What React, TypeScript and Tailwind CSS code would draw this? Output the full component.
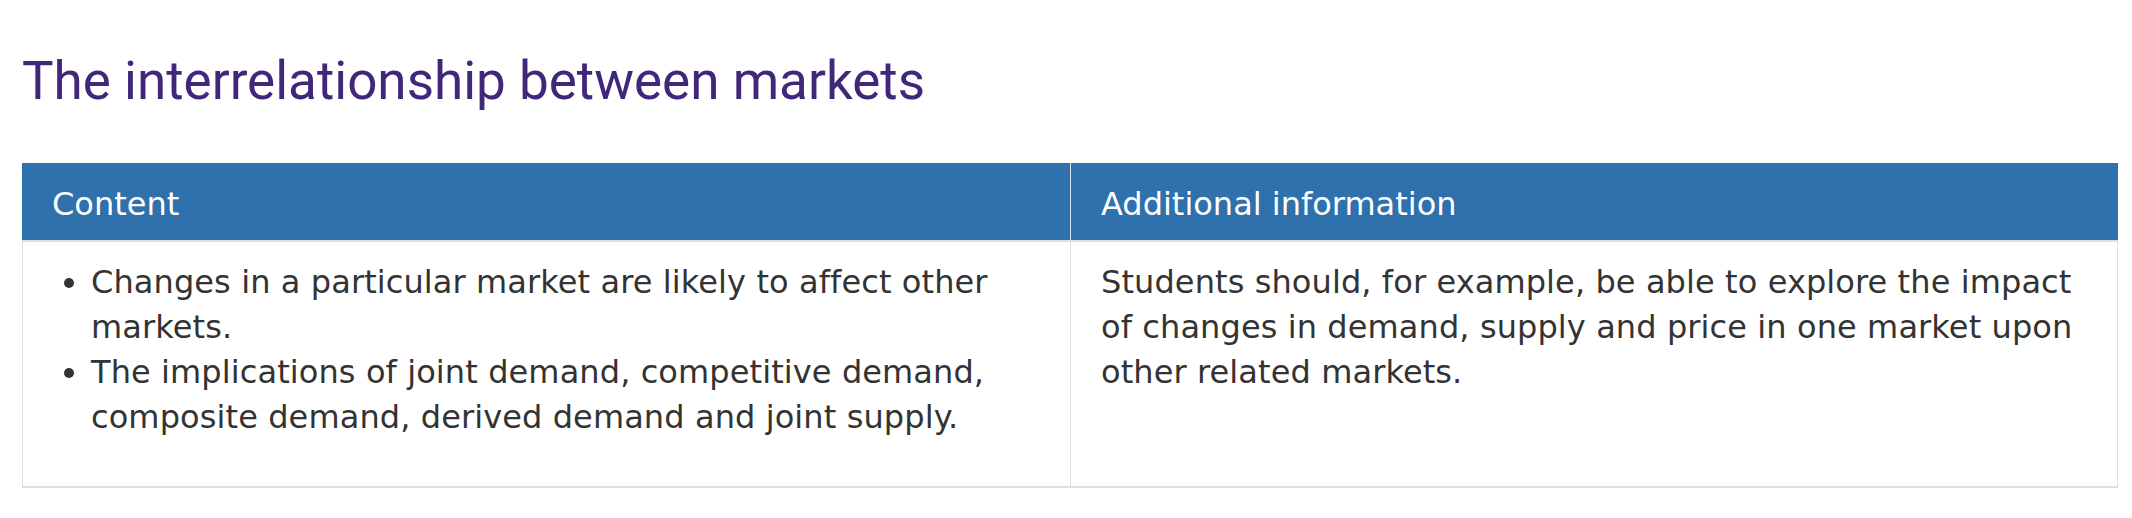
import React from 'react';

const CONTENT_POINTS = [
  'Changes in a particular market are likely to affect other markets.',
  'The implications of joint demand, competitive demand, composite demand, derived demand and joint supply.',
];

export default function App() {
  return (
    <div className="min-h-[518px] bg-white font-['DejaVu_Sans',sans-serif] text-[#333333]">
      {/* Title */}
      <h1 className="ml-[22px] pt-[51px] pb-[51px] font-['Roboto',sans-serif] text-[53px] leading-[61px] font-normal text-[#40277a]">
        The interrelationship between markets
      </h1>

      {/* Spec table */}
      <div className="ml-[22px] w-[2096px]">
        <div className="flex h-[77px] bg-[#2e71ac] text-[32px] leading-[45px] text-white">
          <div className="w-[1049px] border-r border-[#d6e2ee] pl-[30px] pt-[19px]">Content</div>
          <div className="flex-1 pl-[30px] pt-[19px]">Additional information</div>
        </div>
        <div className="flex border-x border-t-2 border-b-2 border-[#dfdfdf] text-[32px] leading-[45px] tracking-[0.1px]">
          <div className="w-[1048px] border-r border-[#dfdfdf] pl-[29px] pr-[30px] pt-[18px] pb-[46px]">
            <ul className="list-disc pl-[39px]">
              {CONTENT_POINTS.map((point) => (
                <li key={point}>{point}</li>
              ))}
            </ul>
          </div>
          <div className="flex-1 pl-[30px] pr-[30px] pt-[18px]">
            Students should, for example, be able to explore the impact of changes in demand, supply and
            price in one market upon other related markets.
          </div>
        </div>
      </div>
    </div>
  );
}
